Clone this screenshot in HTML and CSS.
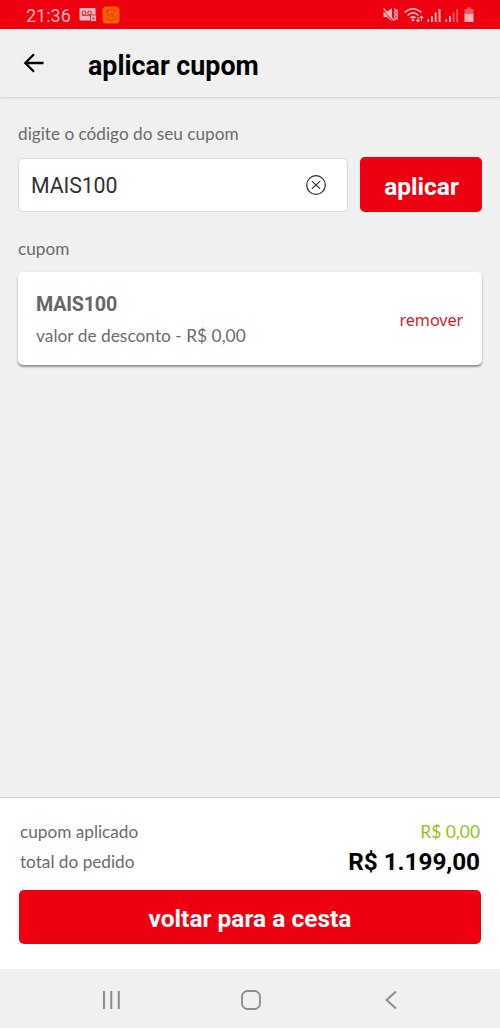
FILE: index.html
```html
<!DOCTYPE html>
<html lang="pt-BR">
<head>
<meta charset="utf-8">
<meta name="viewport" content="width=device-width">
<title>aplicar cupom</title>
<link rel="stylesheet" href="styles.css">
</head>
<body>
<div class="screen">
  <div class="status">
    <span class="clock">21:36</span>
    <svg class="status-left" width="42" height="18" viewBox="0 0 42 18">
      <rect x="0.500" y="2" width="16" height="12.500" rx="1" fill="#ffb9bb"/>
      <circle cx="5" cy="7" r="1.800" fill="none" stroke="#cf4550" stroke-width="1.300"/>
      <circle cx="10.500" cy="7" r="1.800" fill="none" stroke="#cf4550" stroke-width="1.300"/>
      <path d="M3 9.500H12" stroke="#cf4550" stroke-width="1.200"/>
      <rect x="11.500" y="9" width="6" height="6.500" rx="1" fill="#ffb9bb" stroke="#e7000e" stroke-width=".800"/>
      <rect x="13.500" y="11.500" width="2" height="2" fill="#d6323c"/>
      <rect x="23.500" y="0.500" width="17" height="17" rx="3.500" fill="#ff5f00"/>
      <circle cx="32" cy="9" r="5.500" fill="none" stroke="#d94310" stroke-width="1.100" stroke-dasharray="14 3"/>
      <path d="M29.500 7.500v3M31.500 8h3.500M31.500 10h3.500M27 4.500l3 1" stroke="#c93c12" fill="none"/>
    </svg>
    <svg class="status-right" width="96" height="18" viewBox="0 0 96 18" fill="#ffb5b8">
      <path d="M2.500 6h3L11 2v13l-5.500-4h-3z"/>
      <path d="M1.500 3.500l10.500 12" stroke="#ed000f" stroke-width="1"/>
      <path d="M2.500 2.500l10.500 12" stroke="#ffb5b8" stroke-width="1.300"/>
      <path d="M13.500 2.500l1 2-1 2 1 2-1 2 1 2-1 2M16.500 3.500l-.800 1.500.800 1.500-.800 2 .800 2-.800 1.500.800 1.500" fill="none" stroke="#ffb5b8" stroke-width="1.300"/>
      <path d="M23.500 6.500q8.500-7.500 17 0M26.500 9.300q5.500-4.800 11 0M29.300 12q2.700-2.200 5.400 0" fill="none" stroke="#ffb5b8" stroke-width="1.600"/>
      <circle cx="32" cy="14" r="1.400"/>
      <path d="M37 11v5M35.300 14l1.700 1.800 1.700-1.800M40.500 10v5M38.800 12l1.700-1.800 1.700 1.800" fill="none" stroke="#ffb5b8" stroke-width="1.100"/>
      <path d="M46.500 13h1.600v3h-1.600zM50 10h1.800v6H50zM53.700 6.500h1.900V16h-1.900zM57.500 3h2v13h-2zM64.500 13h1.600v3h-1.600zM68 10h1.800v6H68z"/>
      <path d="M71.700 6.500h1.700V16h-1.700zM75.300 3h1.800v13h-1.800z" opacity=".5"/>
      <path d="M86 1.500h4V3h2.500v5h-9V3H86z" opacity=".5"/>
      <path d="M83.500 8h9v8h-9z"/>
    </svg>
  </div>
  <header class="header">
    <svg class="back" width="22" height="22" viewBox="0 0 22 22"><path d="M20.500 11H2.500M11 2.300L2.300 11l8.700 8.700" fill="none" stroke="#000" stroke-width="2.300"/></svg>
    <h1 class="title">aplicar cupom</h1>
  </header>
  <main class="main">
    <div class="label">digite o código do seu cupom</div>
    <div class="form">
      <div class="field">
        <span class="code">MAIS100</span>
        <svg width="22" height="22" viewBox="0 0 22 22" fill="none" stroke="#303030" stroke-width="1.200"><circle cx="11" cy="11" r="9.300"/><path d="M6.900 7.100l8.200 7.800M15.100 7.100l-8.200 7.800"/></svg>
      </div>
      <button class="btn apply">aplicar</button>
    </div>
    <div class="label second">cupom</div>
    <section class="card">
      <div>
        <div class="name">MAIS100</div>
        <div class="discount">valor de desconto - R$ 0,00</div>
      </div>
      <span class="remove">remover</span>
    </section>
  </main>
  <footer class="footer">
    <div class="row"><span>cupom aplicado</span><span class="green">R$ 0,00</span></div>
    <div class="row"><span>total do pedido</span><span class="total">R$ 1.199,00</span></div>
    <button class="btn return">voltar para a cesta</button>
  </footer>
  <nav class="nav">
    <svg width="20" height="20" viewBox="0 0 20 20"><path d="M3 1v18M10.300 1v18M17.800 1v18" stroke="#8c8c8c" stroke-width="2"/></svg>
    <svg width="20" height="20" viewBox="0 0 20 20"><rect x="1" y="1" width="18" height="18" rx="5.500" fill="none" stroke="#8c8c8c" stroke-width="1.800"/></svg>
    <svg width="20" height="20" viewBox="0 0 20 20"><path d="M15 1.500L5.500 10l9.500 8.500" fill="none" stroke="#8c8c8c" stroke-width="2"/></svg>
  </nav>
</div>
</body>
</html>
```
FILE: styles.css
```css
* { box-sizing: border-box; }
body { margin: 0; font-family: Lato, sans-serif; color: #6b6b6b; }
.screen { width: 500px; height: 1028px; display: flex; flex-direction: column; background: #f0f0f0; overflow: hidden; }
.status { height: 29px; flex: none; display: flex; align-items: center; background: #ed000f; padding: 0 23px 0 26px; }
.clock { font: 18px/28px Roboto, sans-serif; color: #ffb5b8; padding-top: 2px; }
.status-left { margin-left: 8px; }
.status-right { margin-left: auto; }
.header { height: 69px; flex: none; display: flex; align-items: center; border-bottom: 1px solid #d9d9d9; box-shadow: 0 1px 2px rgba(0,0,0,.06); padding-left: 23px; }
.title { margin: 5px 0 0 43px; font: bold 26.8px/32px Roboto, sans-serif; color: #000; }
.main { flex: 1; padding: 24px 18px 0; }
.label { font-size: 17.2px; line-height: 24px; }
.form { display: flex; align-items: flex-end; gap: 12px; height: 55px; margin-top: 11px; }
.field { width: 330px; height: 54px; border: 1px solid #dadada; border-radius: 5px; background: #fff; display: flex; align-items: center; justify-content: space-between; padding: 0 20px 0 12px; }
.code { font: 21.3px/28px Roboto, sans-serif; letter-spacing: -.1px; color: #303030; padding-top: 1px; }
.btn { border: 0; border-radius: 5px; background: #ed000f; color: #fff; font: bold 24.5px/28px Roboto, sans-serif; height: 54px; padding: 3px 0 0; }
.apply { width: 122px; height: 55px; padding: 4px 0 0 1px; }
.second { margin-top: 25px; }
.card { height: 93px; margin-top: 11px; background: #fff; border-radius: 5px; box-shadow: 0 2px 2px rgba(0,0,0,.38), 0 0 2px rgba(0,0,0,.08); display: flex; align-items: center; justify-content: space-between; padding: 3px 19px 0 18px; }
.name { font: bold 19.7px/30px Roboto, sans-serif; letter-spacing: -.2px; color: #666; padding-top: 2px; }
.discount { font-size: 17.35px; line-height: 32px; }
.remove { font: 16.2px/24px "Noto Sans", sans-serif; letter-spacing: -.1px; color: #cb1f2c; }
.footer { height: 172px; flex: none; background: #fff; border-top: 1px solid #d2d2d2; padding: 19px 19px 0; }
.row { display: flex; justify-content: space-between; height: 30px; line-height: 30px; font-size: 17.2px; padding: 0 1px; }
.green { color: #8fc31f; font-size: 17.4px; }
.total { font: bold 24.3px/30px Roboto, sans-serif; letter-spacing: -.05px; color: #000; }
.return { width: 100%; margin-top: 13px; }
.nav { height: 59px; flex: none; display: flex; justify-content: space-between; align-items: center; padding: 2px 99px 0 101px; }
```
